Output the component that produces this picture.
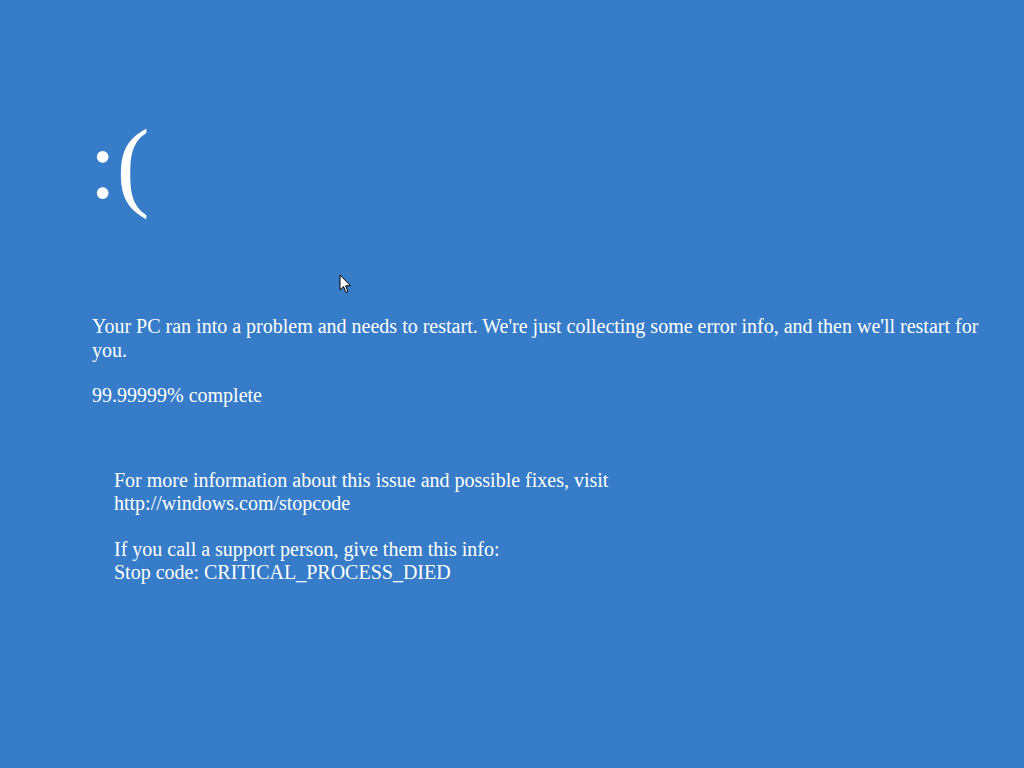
import React from "react";

const Cursor = () => (
  <svg
    className="absolute left-[339px] top-[274px]"
    width="13"
    height="20"
    viewBox="0 0 13 20"
  >
    <path
      d="M1 1 L1 16 L4.5 12.5 L7 18.5 L9 17.7 L6.6 11.8 L11.5 11.8 Z"
      fill="#fff"
      stroke="#000"
      strokeWidth="1"
      strokeLinejoin="round"
    />
  </svg>
);

const App = () => {
  return (
    <div
      className="relative w-[1024px] h-[768px] overflow-hidden bg-[#367cc8] text-white"
      style={{ fontFamily: '"Liberation Serif", "Times New Roman", serif' }}
    >
      <div className="pl-[92px] pr-[30px] pt-[105px]">
        {/* Sad face */}
        <div className="-ml-[3px] text-[99px] leading-[120px] h-[120px]">:(</div>

        {/* Message */}
        <div className="mt-[89px] text-[20px] leading-[24px]">
          <p>
            Your PC ran into a problem and needs to restart. We're just
            collecting some error info, and then we'll restart for you.
          </p>
          <p className="mt-[21px]">99.99999% complete</p>
        </div>

        {/* Details */}
        <div className="mt-[62px] pl-[22px] text-[20px] leading-[23px]">
          <p>
            For more information about this issue and possible fixes, visit
            <br />
            http://windows.com/stopcode
          </p>
          <p className="mt-[23px]">
            If you call a support person, give them this info:
            <br />
            Stop code: CRITICAL_PROCESS_DIED
          </p>
        </div>
      </div>

      <Cursor />
    </div>
  );
};

export default App;
